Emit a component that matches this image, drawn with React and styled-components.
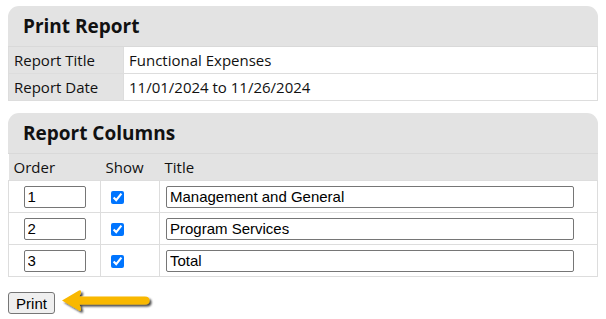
import React from "react";
import styled, { createGlobalStyle } from "styled-components";

const GlobalStyle = createGlobalStyle`
  body {
    margin: 0;
    padding: 6px 8px;
    background: #fff;
    font-family: "Open Sans", "Noto Sans", sans-serif;
    color: #111;
  }
`;

const columns = [
  { order: "1", title: "Management and General" },
  { order: "2", title: "Program Services" },
  { order: "3", title: "Total" },
];

export default function App() {
  return (
    <>
      <GlobalStyle />
      <Panel>
        <PanelHead>Print Report</PanelHead>
        <Table>
          <colgroup>
            <col style={{ width: 115 }} />
            <col />
          </colgroup>
          <tbody>
            <tr>
              <LabelCell>Report Title</LabelCell>
              <ValueCell>Functional Expenses</ValueCell>
            </tr>
            <tr>
              <LabelCell $tall>Report Date</LabelCell>
              <ValueCell $tall>11/01/2024 to 11/26/2024</ValueCell>
            </tr>
          </tbody>
        </Table>
      </Panel>

      <Panel $gap>
        <PanelHead>Report Columns</PanelHead>
        <Table>
          <colgroup>
            <col style={{ width: 92 }} />
            <col style={{ width: 59 }} />
            <col />
          </colgroup>
          <thead>
            <tr>
              <HeadCell>Order</HeadCell>
              <HeadCell>Show</HeadCell>
              <HeadCell>Title</HeadCell>
            </tr>
          </thead>
          <tbody>
            {columns.map((c) => (
              <DataRow key={c.order}>
                <DataCell $center>
                  <OrderInput defaultValue={c.order} />
                </DataCell>
                <DataCell $pad={10}>
                  <Check type="checkbox" defaultChecked />
                </DataCell>
                <DataCell $pad={6}>
                  <TitleInput defaultValue={c.title} />
                </DataCell>
              </DataRow>
            ))}
          </tbody>
        </Table>
      </Panel>

      <Footer>
        <PrintButton>Print</PrintButton>
        <Arrow width="96" height="28" viewBox="0 0 96 28">
          <defs>
            <filter id="sh" x="-20%" y="-40%" width="140%" height="180%">
              <feGaussianBlur in="SourceAlpha" stdDeviation="1.2" />
              <feOffset dx="2" dy="2" result="b" />
              <feComponentTransfer>
                <feFuncA type="linear" slope="0.75" />
              </feComponentTransfer>
              <feMerge>
                <feMergeNode />
                <feMergeNode in="SourceGraphic" />
              </feMerge>
            </filter>
          </defs>
          <path
            d="M1 11.5 L18 1.5 Q20.5 0.5 20 3.5 L18.5 7.5 L84 7.5 Q88.5 7.5 88.5 11.5 Q88.5 15.5 84 15.5 L18.5 15.5 L20 19.5 Q20.5 22.5 18 21.5 Z"
            fill="#f9b800"
            filter="url(#sh)"
          />
        </Arrow>
      </Footer>
    </>
  );
}

const Panel = styled.div`
  width: 590px;
  margin-top: ${(p) => (p.$gap ? "12px" : "0")};
`;

const PanelHead = styled.div`
  height: 40px;
  padding: 0 15px;
  display: flex;
  align-items: center;
  background: #e3e3e3;
  border-radius: 11px 11px 0 0;
  font-size: 19px;
  font-weight: 700;
  color: #111;
  border-bottom: 1px solid #d9d9d9;
`;

const Table = styled.table`
  width: 100%;
  border-collapse: collapse;
  table-layout: fixed;
  font-size: 15px;

  td,
  th {
    box-sizing: border-box;
  }
`;

const LabelCell = styled.td`
  height: ${(p) => (p.$tall ? "27px" : "26px")};
  padding: 0 5px;
  background: #e3e3e3;
  border: 1px solid #ddd;
  border-top: none;
  border-right: none;
  white-space: nowrap;
`;

const ValueCell = styled.td`
  height: ${(p) => (p.$tall ? "27px" : "26px")};
  padding: 0 5px;
  background: #fff;
  border: 1px solid #ddd;
  border-top: none;
`;

const HeadCell = styled.th`
  height: 27px;
  padding: 0 5px;
  text-align: left;
  font-weight: 400;
  background: #e3e3e3;
  border-bottom: 1px solid #ddd;
`;

const DataRow = styled.tr`
  height: 32px;
`;

const DataCell = styled.td`
  height: 32px;
  padding: 0 ${(p) => (p.$pad ? `${p.$pad}px` : "0")};
  text-align: ${(p) => (p.$center ? "center" : "left")};
  border: 1px solid #ddd;
  border-top: none;
`;

const baseInput = `
  box-sizing: border-box;
  height: 22px;
  border: 1px solid #767676;
  border-radius: 2px;
  padding: 1px 3px;
  font-family: "Liberation Sans", Arial, sans-serif;
  font-size: 15px;
  color: #000;
  background: #fff;
  vertical-align: middle;
`;

const OrderInput = styled.input`
  ${baseInput}
  width: 62px;
`;

const TitleInput = styled.input`
  ${baseInput}
  width: 408px;
`;

const Check = styled.input`
  width: 13px;
  height: 13px;
  margin: 0 0 2px;
  accent-color: #0075ff;
  vertical-align: middle;
`;

const Footer = styled.div`
  display: flex;
  align-items: center;
  gap: 6px;
  margin-top: 12px;
`;

const PrintButton = styled.button`
  box-sizing: border-box;
  width: 47px;
  height: 22px;
  padding: 0;
  font-family: "Liberation Sans", Arial, sans-serif;
  font-size: 15px;
  color: #000;
  background: #efefef;
  border: 1px solid #767676;
  border-radius: 3px;
`;

const Arrow = styled.svg`
  display: block;
`;
